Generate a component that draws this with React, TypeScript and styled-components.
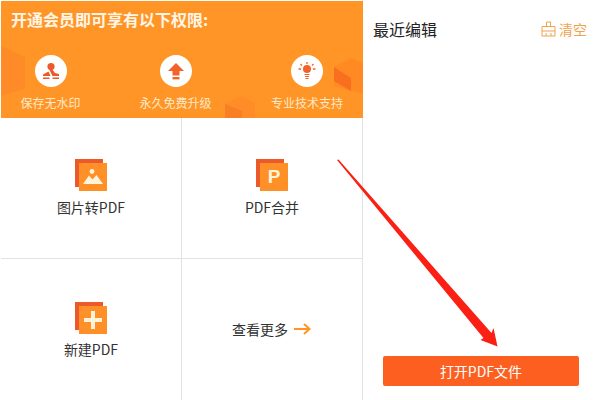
import React from "react";
import styled, { createGlobalStyle } from "styled-components";

const GlobalStyle = createGlobalStyle`
  html, body {
    margin: 0;
    padding: 0;
    background: #fff;
    font-family: "Noto Sans CJK SC", "Liberation Sans", sans-serif;
  }
`;

const Page = styled.div`
  position: relative;
  width: 600px;
  height: 400px;
  display: flex;
  overflow: hidden;
  background: #fff;
`;

const LeftColumn = styled.div`
  width: 363px;
  height: 400px;
  box-sizing: border-box;
  padding-left: 1px;
  padding-top: 1px;
  border-right: 1px solid #e2e2e2;
  display: flex;
  flex-direction: column;
`;

const Banner = styled.div`
  position: relative;
  height: 117px;
  background: #ff9526;
  overflow: hidden;
  margin-right: -1px;
  flex-shrink: 0;
`;

const BannerTitle = styled.div`
  padding: 6px 0 0 10px;
  height: 24px;
  font-size: 16px;
  line-height: 24px;
  font-weight: 700;
  color: #fff6e6;
`;

const PerkRow = styled.div`
  position: relative;
  display: grid;
  grid-template-columns: 99px 151px 112px;
  margin-top: 24px;
`;

const Perk = styled.div`
  display: flex;
  flex-direction: column;
  align-items: center;
  gap: 7px;
`;

const PerkIcon = styled.div`
  width: 32px;
  height: 32px;
  border-radius: 50%;
  background: #fff;
  display: flex;
  align-items: center;
  justify-content: center;
`;

const PerkLabel = styled.div`
  font-size: 12px;
  line-height: 18px;
  color: #ffe9c8;
  white-space: nowrap;
`;

const Decor = styled.svg`
  position: absolute;
  top: 0;
  left: 0;
`;

const Tiles = styled.div`
  flex: 1;
  display: grid;
  grid-template-columns: 181px 180px;
  grid-template-rows: 141px 141px;
`;

const Tile = styled.div<{ $right?: boolean; $bottom?: boolean }>`
  box-sizing: border-box;
  display: flex;
  flex-direction: column;
  align-items: center;
  padding-top: ${(p) => (p.$bottom ? "43px" : "41px")};
  gap: ${(p) => (p.$bottom ? "5px" : "6px")};
  border-right: ${(p) => (p.$right ? "none" : "1px solid #e2e2e2")};
  border-bottom: ${(p) => (p.$bottom ? "none" : "1px solid #e2e2e2")};
`;

const TileIcon = styled.div`
  position: relative;
  width: 32px;
  height: 32px;
`;

const IconBack = styled.div`
  position: absolute;
  left: 0;
  top: 0;
  width: 28px;
  height: 28px;
  background: #ea5a2a;
`;

const IconFront = styled.div`
  position: absolute;
  left: 4px;
  top: 4px;
  width: 28px;
  height: 28px;
  background: #ff9028;
  display: flex;
  align-items: center;
  justify-content: center;
  color: #fff3dc;
  font-size: 19px;
  font-weight: 700;
  font-family: "Liberation Sans", sans-serif;
`;

const TileLabel = styled.div`
  font-size: 14px;
  line-height: 20px;
  color: #333;
`;

const MoreTile = styled.div`
  display: flex;
  align-items: center;
  justify-content: center;
  gap: 5px;
  font-size: 14px;
  color: #333;
  padding: 0 1px 1px 0;
`;

const RightColumn = styled.div`
  flex: 1;
  display: flex;
  flex-direction: column;
  padding: 0 13px 14px 10px;
`;

const RightHeader = styled.div`
  display: flex;
  align-items: center;
  justify-content: space-between;
  height: 58px;
`;

const RightTitle = styled.div`
  font-size: 16px;
  color: #222;
`;

const ClearLink = styled.div`
  display: flex;
  align-items: center;
  gap: 3px;
  font-size: 14px;
  color: #f2a24c;
`;

const Spacer = styled.div`
  flex: 1;
`;

const OpenButton = styled.div`
  width: 196px;
  height: 30px;
  margin-left: 10px;
  background: #fc5f20;
  border-radius: 2px;
  color: #fff;
  font-size: 14px;
  display: flex;
  align-items: center;
  justify-content: center;
`;

const Overlay = styled.svg`
  position: absolute;
  left: 0;
  top: 0;
  pointer-events: none;
`;

export default function App() {
  return (
    <Page>
      <GlobalStyle />
      <LeftColumn>
        <Banner>
          <Decor width="363" height="117" viewBox="0 0 363 117">
            <path d="M0 45 L24 56 L24 88 L0 95 Z" fill="#ff8a28" />
            <path d="M333 66 L350 57 L362 62 L362 92 L350 90 L333 85 Z" fill="#ff8a24" />
            <path d="M333 66 L350 77 L350 90 L333 80 Z" fill="#f8701f" />
            <path d="M224 103 L240 95 L254 102 L254 117 L224 117 Z" fill="#ff8c26" />
            <path d="M224 103 L241 110 L241 117 L224 117 Z" fill="#f87f24" />
          </Decor>
          <BannerTitle>开通会员即可享有以下权限:</BannerTitle>
          <PerkRow>
            <Perk>
              <PerkIcon>
                <svg width="20" height="20" viewBox="0 0 20 20">
                  <circle cx="10" cy="5.5" r="3.6" fill="#ea5a2a" />
                  <path d="M8 8 L11 8 L14 12 L18 13 L18 15 L11.5 15 Z" fill="#ea5a2a" />
                  <path d="M7.5 10.5 L9.5 15 L2 15 L2 13.5 Z" fill="#ea5a2a" />
                  <path d="M2 16.5 H8.5 V18 H2 Z M11.5 16.5 H18 V18 H11.5 Z" fill="#ea5a2a" />
                </svg>
              </PerkIcon>
              <PerkLabel>保存无水印</PerkLabel>
            </Perk>
            <Perk>
              <PerkIcon>
                <svg width="18" height="20" viewBox="0 0 18 20">
                  <path d="M9 2 L17 10 H12.5 V14.5 H5.5 V10 H1 Z" fill="#f2622a" />
                  <rect x="5.5" y="16" width="7" height="2.4" fill="#f2622a" />
                </svg>
              </PerkIcon>
              <PerkLabel>永久免费升级</PerkLabel>
            </Perk>
            <Perk>
              <PerkIcon>
                <svg width="20" height="20" viewBox="0 0 20 20">
                  <circle cx="10" cy="8" r="4" fill="#f2622a" />
                  <path d="M10 1 V3 M3.5 3 L5 4.5 M16.5 3 L15 4.5 M1.5 8 H4 M16 8 H18.5" stroke="#f2622a" strokeWidth="1.3" />
                  <path d="M7.5 13.5 H12.5 M8 15.5 H12 M8.5 17.5 H11.5" stroke="#f2622a" strokeWidth="1" />
                </svg>
              </PerkIcon>
              <PerkLabel>专业技术支持</PerkLabel>
            </Perk>
          </PerkRow>
        </Banner>
        <Tiles>
          <Tile>
            <TileIcon>
              <IconBack />
              <IconFront>
                <svg width="24" height="20" viewBox="0 0 24 20">
                  <circle cx="11" cy="4.5" r="2.4" fill="#fff3dc" />
                  <path d="M2 17 L8 8.5 L11.5 12.5 L15.5 8 L22 17 Z" fill="#fff3dc" />
                </svg>
              </IconFront>
            </TileIcon>
            <TileLabel>图片转PDF</TileLabel>
          </Tile>
          <Tile $right>
            <TileIcon>
              <IconBack />
              <IconFront>P</IconFront>
            </TileIcon>
            <TileLabel>PDF合并</TileLabel>
          </Tile>
          <Tile $bottom>
            <TileIcon>
              <IconBack />
              <IconFront>
                <svg width="20" height="20" viewBox="0 0 20 20">
                  <path d="M8 1 H12 V8 H19 V12 H12 V19 H8 V12 H1 V8 H8 Z" fill="#fff3dc" />
                </svg>
              </IconFront>
            </TileIcon>
            <TileLabel>新建PDF</TileLabel>
          </Tile>
          <MoreTile>
            查看更多
            <svg width="18" height="12" viewBox="0 0 18 12">
              <path d="M1 6 H16 M11 1 L16.5 6 L11 11" fill="none" stroke="#ff9526" strokeWidth="2" />
            </svg>
          </MoreTile>
        </Tiles>
      </LeftColumn>
      <RightColumn>
        <RightHeader>
          <RightTitle>最近编辑</RightTitle>
          <ClearLink>
            <svg width="15" height="16" viewBox="0 0 15 16">
              <path d="M5.5 5.5 V1 H9.5 V5.5 M1 5.5 H14 V15 H1 Z M1 10 H14 M5 15 V12 M10 15 V12" fill="none" stroke="#f2a24c" strokeWidth="1" />
            </svg>
            清空
          </ClearLink>
        </RightHeader>
        <Spacer />
        <OpenButton>打开PDF文件</OpenButton>
      </RightColumn>
      <Overlay width="600" height="400" viewBox="0 0 600 400">
        <path d="M337 160 L338.5 159.5 L491.5 333 L493.5 328 L497.5 346.5 L480.5 340 L483.5 338 Z" fill="#fb1f14" />
      </Overlay>
    </Page>
  );
}
